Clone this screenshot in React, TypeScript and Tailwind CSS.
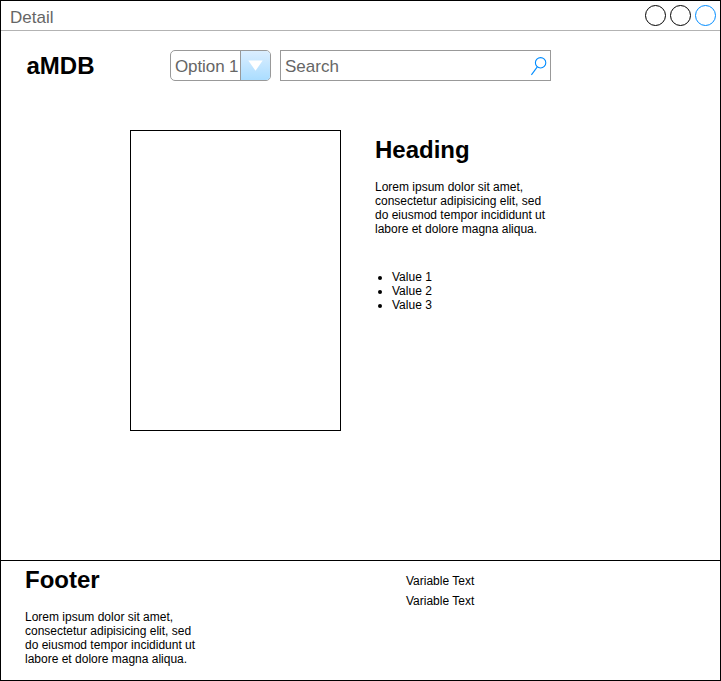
const LOREM = ["Lorem ipsum dolor sit amet,", "consectetur adipisicing elit, sed", "do eiusmod tempor incididunt ut", "labore et dolore magna aliqua."];

function TextBlock({ title }: { title: string }) {
  return (
    <div>
      <h2 className="text-2xl leading-7 font-bold">{title}</h2>
      <p className="mt-4 text-xs leading-[14px] whitespace-nowrap">
        {LOREM.map((line) => (
          <span key={line} className="block">{line}</span>
        ))}
      </p>
    </div>
  );
}

function TitleBar() {
  return (
    <div className="flex h-[30px] shrink-0 items-start justify-between border-b border-[#b3b3b3] pl-[9px] pr-[3px] pt-[3px]">
      <span className="mt-1 text-[17px] leading-[19px] text-[#666666]">Detail</span>
      <svg width="73" height="23" viewBox="0 0 73 23" fill="none">
        <circle cx="11.5" cy="11.5" r="10" stroke="#000" />
        <circle cx="36.5" cy="11.5" r="10" stroke="#000" />
        <circle cx="61.5" cy="11.5" r="10" stroke="#008cff" />
      </svg>
    </div>
  );
}

function Header() {
  return (
    <header className="flex h-[31px] mt-[19px] shrink-0 items-center text-[17px] text-[#666666]">
      <h1 className="ml-[25px] w-36 pl-[0.5px] text-2xl leading-7 font-bold text-black">aMDB</h1>
      <button className="flex h-[31px] w-[101px] overflow-hidden rounded-[5px] border border-[#999999]">
        <span className="w-[69px] pl-1 text-left leading-[31px] tracking-[-0.1px] whitespace-nowrap">Option 1</span>
        <span className="flex h-full w-[30px] items-center justify-center border-l border-[#999999] bg-linear-to-b from-[#dbeeff] to-[#aaddff] pr-px">
          <svg width="15" height="11" viewBox="0 0 15 11">
            <path d="M0.3 0.5H14.7L7.5 10.7Z" fill="#fff" />
          </svg>
        </span>
      </button>
      <div className="ml-[9px] flex h-[31px] w-[271px] items-center justify-between border border-[#999999] pl-1 pr-[3px]">
        <span className="pt-0.5 leading-[27px]">Search</span>
        <svg width="17" height="20" viewBox="0 0 17 20" fill="none" stroke="#008cff" strokeWidth="1.1">
          <circle cx="10.6" cy="6.8" r="5.2" />
          <path d="M7.3 10.9L1.4 18.8" />
        </svg>
      </div>
    </header>
  );
}

export default function App() {
  return (
    <div className="flex h-[681px] w-[721px] flex-col border border-black bg-white font-['Liberation_Sans',Arial,sans-serif] text-black">
      <TitleBar />
      <Header />
      <main className="flex flex-1 pl-[129px] pt-[49px]">
        <div className="h-[301px] w-[211px] border border-black" />
        <div className="ml-[34px] pt-1.5">
          <TextBlock title="Heading" />
          <ul className="mt-[34px] text-xs leading-[14px]">
            {["Value 1", "Value 2", "Value 3"].map((v) => (
              <li key={v} className="flex items-center">
                <span className="mt-px mr-[10px] ml-[3px] size-1 rounded-full bg-black" />
                {v}
              </li>
            ))}
          </ul>
        </div>
      </main>
      <footer className="flex h-[120px] shrink-0 border-t border-black pl-6 pt-[5px]">
        <div className="w-[381px]">
          <TextBlock title="Footer" />
        </div>
        <div className="flex flex-col gap-1.5 pt-2 text-xs leading-[14px]">
          <span>Variable Text</span>
          <span>Variable Text</span>
        </div>
      </footer>
    </div>
  );
}
